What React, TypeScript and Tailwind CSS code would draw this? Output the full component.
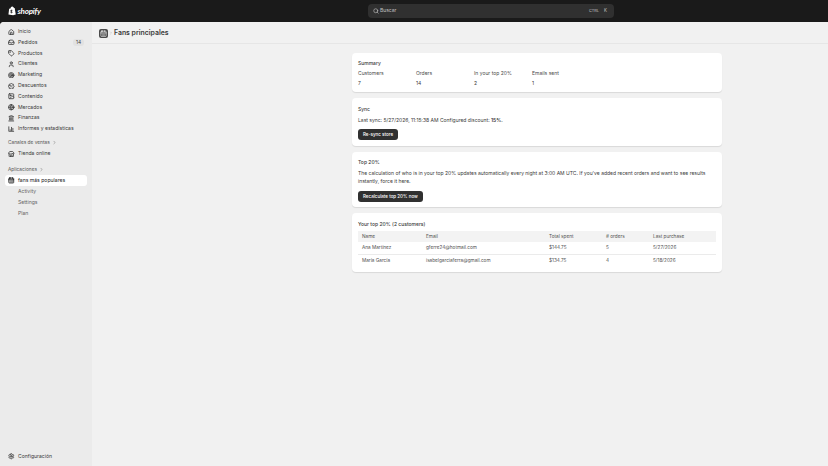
import React from "react";
import { Home, Inbox, Tag, User, Target, BadgePercent, Image, Globe, Landmark, BarChart3, Store, Settings, Search, ChevronRight, CalendarDays } from "lucide-react";

const font = { fontFamily: "Inter, 'Liberation Sans', sans-serif" };

function NavItem({ icon: I, label, badge }: { icon: any; label: string; badge?: string }) {
  return (
    <div className="h-[10.8px] flex items-center pl-[8px] pr-[8px] gap-[3.5px] text-[5.1px] text-[#3a3a3a]">
      <I size={6.5} strokeWidth={3} className="text-[#3a3a3a] shrink-0" />
      <span className="flex-1 whitespace-nowrap">{label}</span>
      {badge && <span className="bg-[#e2e2e2] rounded-[3px] px-[3px] text-[4.8px] leading-[7px]">{badge}</span>}
    </div>
  );
}

function Card({ children, className = "" }: { children: React.ReactNode; className?: string }) {
  return <div className={"bg-white rounded-[4px] shadow-[0_1px_1px_rgba(0,0,0,0.10)] px-[6px] " + className}>{children}</div>;
}

function Btn({ children }: { children: React.ReactNode }) {
  return <div className="inline-block bg-[#303030] text-white rounded-[3px] h-[11px] leading-[11px] px-[5px] text-[4.5px] font-medium whitespace-nowrap">{children}</div>;
}

const row = "grid grid-cols-[64px_123px_57px_47px_1fr] items-center pl-[4px] text-[4.7px] text-[#505050]";

export default function App() {
  return (
    <div className="w-[828px] h-[466px] overflow-hidden flex flex-col bg-[#1a1a1a]" style={font}>
      <div className="h-[22px] shrink-0 flex items-center relative">
        <div className="flex items-center gap-[1.5px] pl-[8px] text-white">
          <svg width="8" height="10" viewBox="0 0 18 21"><path d="M13.5 3.5 15 3.8 17.5 18.5 11.5 20 1 18.2 2.6 5.6 5.5 4.7C6 2.4 7.6.5 9.5.5c.8 0 1.3.4 1.7 1 1 .1 1.8.8 2.3 2Z" fill="#fff"/><path d="M10 8.2c-.5-.2-1-.3-1.6-.3-1.8 0-2.9 1.2-2.9 2.5 0 1.6 2.3 1.8 2.3 2.8 0 .4-.3.6-.7.6-.7 0-1.4-.6-1.4-.6l-.5 1.5s.7.9 2.3.9c1.5 0 2.5-1 2.5-2.4 0-1.9-2.3-2.1-2.3-2.9 0-.2.1-.5.7-.5.5 0 1.2.3 1.2.3Z" fill="#1a1a1a"/></svg>
          <span className="text-[8px] font-bold italic tracking-[-0.2px]" style={{ fontFamily: "Lato, sans-serif" }}>shopify</span>
        </div>
        <div className="absolute left-[368px] top-[4px] w-[246px] h-[14px] bg-[#303030] rounded-[4px] flex items-center pl-[5px] pr-[7px] text-[#c0c0c0] text-[5px]">
          <Search size={6} strokeWidth={2.5} className="mr-[1px]" />
          <span className="flex-1">Buscar</span>
          <span className="mr-[5px] text-[3.9px]">CTRL</span>
          <span className="text-[4.4px]">K</span>
        </div>
      </div>
      <div className="flex-1 flex rounded-tl-[4px] overflow-hidden bg-[#f1f1f1]">
        <div className="w-[92px] shrink-0 bg-[#ebebeb] flex flex-col pt-[4.5px]">
          <NavItem icon={Home} label="Inicio" />
          <NavItem icon={Inbox} label="Pedidos" badge="14" />
          <NavItem icon={Tag} label="Productos" />
          <NavItem icon={User} label="Clientes" />
          <NavItem icon={Target} label="Marketing" />
          <NavItem icon={BadgePercent} label="Descuentos" />
          <NavItem icon={Image} label="Contenido" />
          <NavItem icon={Globe} label="Mercados" />
          <NavItem icon={Landmark} label="Finanzas" />
          <NavItem icon={BarChart3} label="Informes y estadísticas" />
          <div className="mt-[3px] h-[11px] flex items-center pl-[8px] gap-[2px] text-[4.8px] text-[#555]">
            Canales de ventas <ChevronRight size={5} />
          </div>
          <NavItem icon={Store} label="Tienda online" />
          <div className="mt-[5px] h-[11px] flex items-center pl-[8px] gap-[2px] text-[4.8px] text-[#555]">
            Aplicaciones <ChevronRight size={5} />
          </div>
          <div className="mx-[5px] h-[10.8px] bg-white rounded-[3px] flex items-center pl-[3px] gap-[3.5px] text-[5.1px] text-[#1a1a1a]">
            <CalendarDays size={6.5} strokeWidth={3} />
            <span className="whitespace-nowrap">fans más populares</span>
          </div>
          <div className="pl-[18px] text-[5.1px] text-[#666]">
            <div className="h-[10.8px] leading-[10.8px]">Activity</div>
            <div className="h-[10.8px] leading-[10.8px]">Settings</div>
            <div className="h-[10.8px] leading-[10.8px]">Plan</div>
          </div>
          <div className="mt-auto mb-[4px]">
            <NavItem icon={Settings} label="Configuración" />
          </div>
        </div>
        <div className="flex-1 flex flex-col">
          <div className="h-[22px] shrink-0 border-b border-[#e6e6e6] flex items-center pl-[7px] pt-[1px] gap-[1px]">
            <div className="w-[9px] h-[9px] bg-[#4a4a4a] rounded-[2px] flex items-center justify-center text-white">
              <CalendarDays size={7} strokeWidth={2} />
            </div>
            <ChevronRight size={4} className="text-[#999]" />
            <span className="text-[6.9px] font-semibold text-[#3a3a3a]">Fans principales</span>
          </div>
          <div className="w-[370px] ml-[260px] mt-[9px] flex flex-col gap-[6px] text-[5px] text-[#3a3a3a]">
            <Card className="h-[39px] pt-[7px]">
              <div className="font-medium leading-[7px]">Summary</div>
              <div className="grid grid-cols-[58px_58px_58px_58px] mt-[3px] leading-[7px] text-[#4a4a4a]">
                <div>Customers</div><div>Orders</div><div>In your top 20%</div><div>Emails sent</div>
              </div>
              <div className="grid grid-cols-[58px_58px_58px_58px] mt-[3px] leading-[7px]">
                <div>7</div><div>14</div><div>2</div><div>1</div>
              </div>
            </Card>
            <Card className="h-[48px] pt-[7.5px]">
              <div className="font-medium leading-[7px]">Sync</div>
              <div className="mt-[4px] leading-[7px]">Last sync: 5/27/2026, 11:15:38 AM Configured discount: <span className="font-semibold">15%</span>.</div>
              <div className="mt-[5.5px]"><Btn>Re-sync store</Btn></div>
            </Card>
            <Card className="h-[55px] pt-[7px]">
              <div className="font-medium leading-[7px]">Top 20%</div>
              <div className="mt-[4px] leading-[7.8px]">The calculation of who is in your top 20% updates automatically every night at 3:00 AM UTC. If you've added recent orders and want to see results instantly, force it here.</div>
              <div className="mt-[5.4px]"><Btn>Recalculate top 20% now</Btn></div>
            </Card>
            <Card className="h-[59px] pt-[7.5px]">
              <div className="font-medium leading-[7px]">Your top 20% (2 customers)</div>
              <div className={row + " mt-[3.5px] h-[10.5px] bg-[#f3f3f3] text-[#5c5c5c]"}>
                <div>Name</div><div>Email</div><div>Total spent</div><div># orders</div><div>Last purchase</div>
              </div>
              <div className={row + " h-[13px] border-b border-[#ebebeb]"}>
                <div>Ana Martínez</div><div>gferre24@hotmail.com</div><div>$144.75</div><div>5</div><div>5/27/2026</div>
              </div>
              <div className={row + " h-[13px]"}>
                <div>María García</div><div>isabelgarciaferra@gmail.com</div><div>$134.75</div><div>4</div><div>5/18/2026</div>
              </div>
            </Card>
          </div>
        </div>
      </div>
    </div>
  );
}
